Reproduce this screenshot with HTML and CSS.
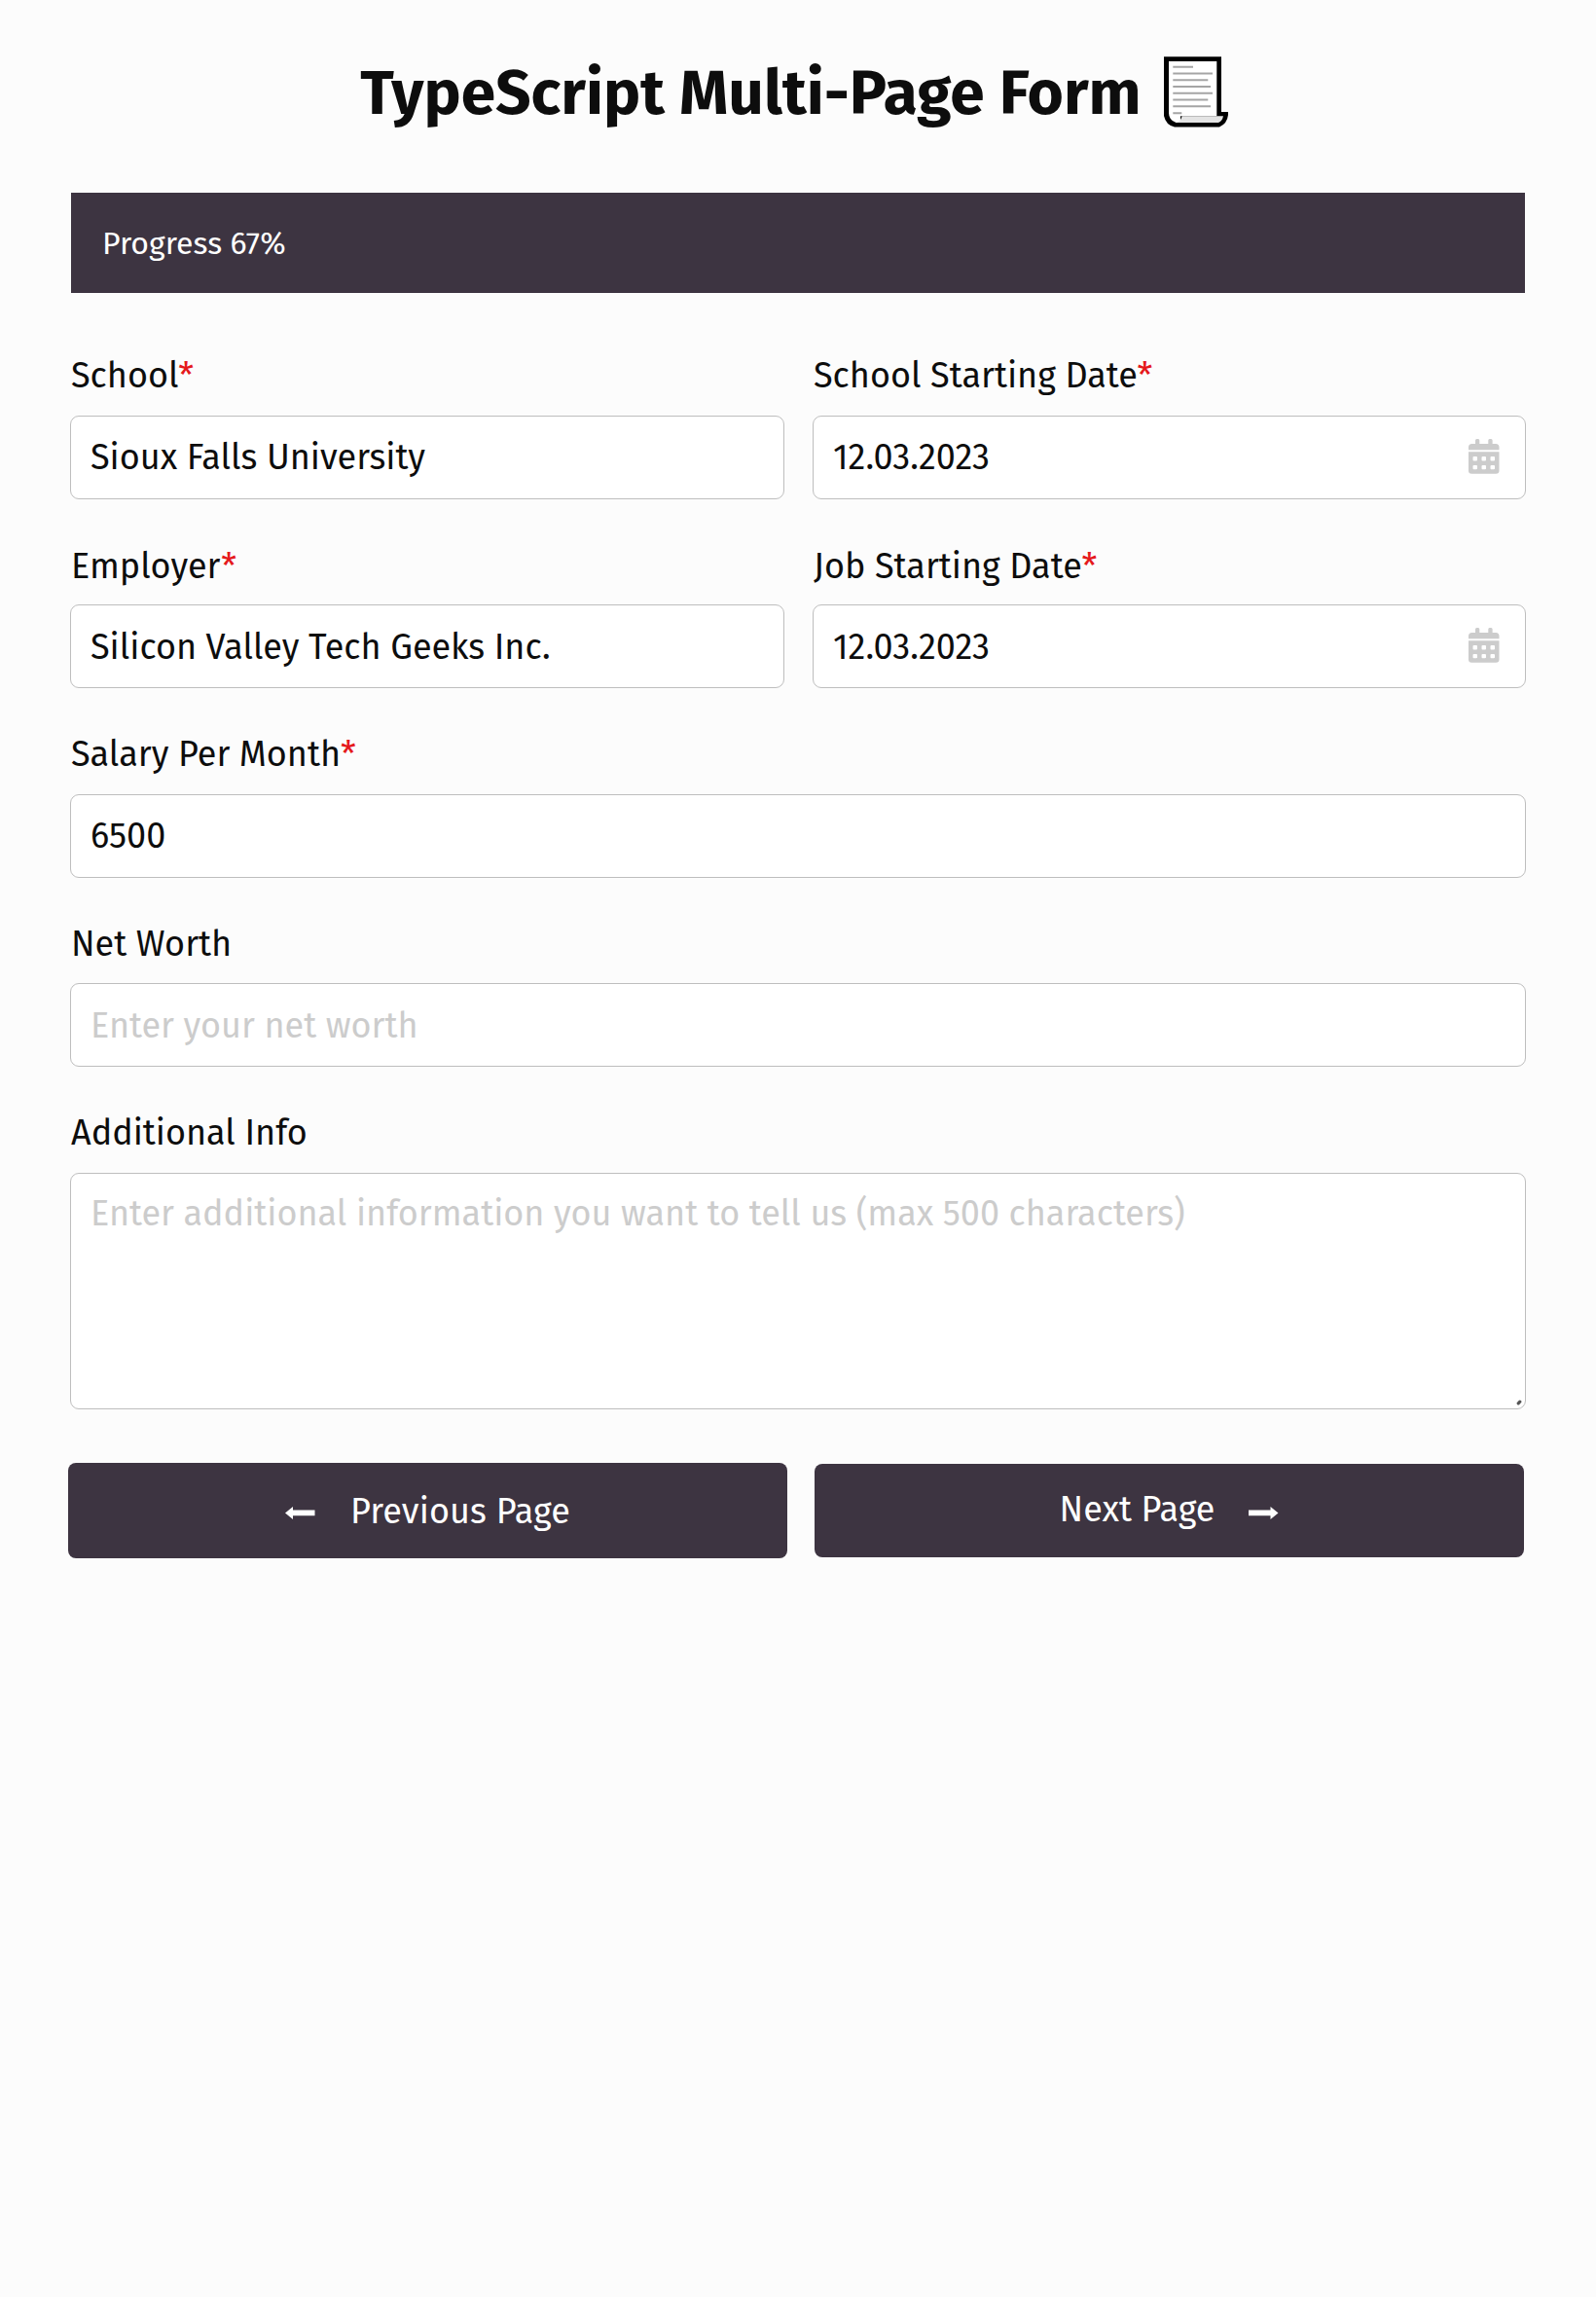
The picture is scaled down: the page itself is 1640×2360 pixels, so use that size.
FILE: index.html
```html
<!DOCTYPE html>
<html lang="en">
<head>
<meta charset="utf-8">
<title>TypeScript Multi-Page Form</title>
<link rel="stylesheet" href="styles.css">
</head>
<body>
<svg class="sprite" aria-hidden="true">
  <symbol id="calendar" viewBox="0 0 32 36">
    <path d="M7 5V1.5Q7 0 8.500 0H10Q11.300 0 11.300 1.500V5H20.300V1.500Q20.300 0 21.600 0H23.200Q24.600 0 24.600 1.500V5H28Q31.500 5 31.500 8.500V11.300H0V8.500Q0 5 3.500 5H7Z"/>
    <path fill-rule="evenodd" d="M0 13.300H31.500V32.500Q31.500 35.700 28.200 35.700H3.300Q0 35.700 0 32.500ZM5.500 18H8Q9 18 9 19V21.500Q9 22.500 8 22.500H5.500Q4.500 22.500 4.500 21.500V19Q4.500 18 5.500 18ZM14.500 18H17Q18 18 18 19V21.500Q18 22.500 17 22.500H14.500Q13.500 22.500 13.500 21.500V19Q13.500 18 14.500 18ZM23.500 18H26Q27 18 27 19V21.500Q27 22.500 26 22.500H23.500Q22.500 22.500 22.500 21.500V19Q22.500 18 23.500 18ZM5.500 27H8Q9 27 9 28V30.300Q9 31.300 8 31.300H5.500Q4.500 31.300 4.500 30.300V28Q4.500 27 5.500 27ZM14.500 27H17Q18 27 18 28V30.300Q18 31.300 17 31.300H14.500Q13.500 31.300 13.500 30.300V28Q13.500 27 14.500 27ZM23.500 27H26Q27 27 27 28V30.300Q27 31.300 26 31.300H23.500Q22.500 31.300 22.500 30.300V28Q22.500 27 23.500 27Z"/>
  </symbol>
</svg>
<main class="page">
  <h1 class="title">
    <span>TypeScript Multi-Page Form</span>
    <svg class="title-icon" viewBox="0 0 66 73" aria-hidden="true">
      <path d="M0 .3H59V57H66V60Q65 69 57 72.500H11Q2 70.500 0 61Z" fill="#000"/>
      <path d="M5 5H54.300V61.300H17V68H12.500Q5 65.500 5 58Z" fill="#fff"/>
      <path d="M18.500 61.300H61Q60 66.500 56 68H13Q18 66 18.500 61.300Z" fill="#e4e4e4"/>
      <path d="M9.300 10.700H30M9.300 17.500H50M9.300 24.300H45.300M9.300 31H48M9.300 37.800H50M9.300 44.500H45.300M9.300 51.300H48M9.300 58.200H18.300" fill="none" stroke="#a5a5a5" stroke-width="2"/>
    </svg>
  </h1>
  <div class="progress">Progress 67%</div>
  <form class="form">
    <div class="row two">
      <div class="field">
        <label class="label" for="school">School<span class="req">*</span></label>
        <input class="input" id="school" type="text" value="Sioux Falls University">
      </div>
      <div class="field">
        <label class="label" for="school-date">School Starting Date<span class="req">*</span></label>
        <div class="date">
          <input class="input" id="school-date" type="text" value="12.03.2023">
          <svg class="date-icon"><use href="#calendar"/></svg>
        </div>
      </div>
    </div>
    <div class="row two work">
      <div class="field">
        <label class="label" for="employer">Employer<span class="req">*</span></label>
        <input class="input" id="employer" type="text" value="Silicon Valley Tech Geeks Inc.">
      </div>
      <div class="field">
        <label class="label" for="job-date">Job Starting Date<span class="req">*</span></label>
        <div class="date">
          <input class="input" id="job-date" type="text" value="12.03.2023">
          <svg class="date-icon"><use href="#calendar"/></svg>
        </div>
      </div>
    </div>
    <div class="row">
      <div class="field">
        <label class="label" for="salary">Salary Per Month<span class="req">*</span></label>
        <input class="input" id="salary" type="text" value="6500">
      </div>
    </div>
    <div class="row worth">
      <div class="field">
        <label class="label" for="worth">Net Worth</label>
        <input class="input" id="worth" type="text" placeholder="Enter your net worth">
      </div>
    </div>
    <div class="row">
      <div class="field">
        <label class="label" for="info">Additional Info</label>
        <div class="area">
          <textarea class="input textarea" id="info" placeholder="Enter additional information you want to tell us (max 500 characters)"></textarea>
          <svg class="grip" viewBox="0 0 6 6"><path d="M2.200 3.800L3.800 2.200" stroke="#555" stroke-width="3.200" stroke-linecap="round"/></svg>
        </div>
      </div>
    </div>
    <div class="actions">
      <button class="btn prev" type="button">
        <svg class="arrow" viewBox="0 0 31 13"><path d="M0 6.500L8 0V3.500H30.500V9.200H8V13Z" fill="#fff"/></svg>
        <span>Previous Page</span>
      </button>
      <button class="btn next" type="button">
        <span>Next Page</span>
        <svg class="arrow" viewBox="0 0 31 13"><path d="M30.500 6.500L22.500 0V3.500H0V9.200H22.500V13Z" fill="#fff"/></svg>
      </button>
    </div>
  </form>
</main>
</body>
</html>
```
FILE: styles.css
```css
* { box-sizing: border-box; }

body {
  margin: 0;
  min-height: 2360px;
  background: #fcfcfc;
  color: #0d0d0d;
  font: 400 36px/44px "Fira Sans", "Noto Sans", sans-serif;
}

.sprite { position: absolute; width: 0; height: 0; }

.page { padding: 58px 72px 0; }

.title {
  display: flex;
  justify-content: center;
  gap: 23px;
  height: 140px;
  margin: 0;
  padding-right: 8px;
  font-size: 64px;
  font-weight: 700;
  line-height: 76px;
}

.title span { white-space: nowrap; }

.title-icon { width: 66px; height: 73px; }

.progress {
  height: 102.500px;
  margin: 0 1.500px 0 1px;
  padding: 30px 32px 0;
  background: #3d3441;
  color: #fff;
  font-size: 32px;
}

.form { padding-top: 63.500px; }

.row { margin-bottom: 45.400px; }

.two {
  display: grid;
  grid-template-columns: 734px 733px;
  gap: 29px;
}

.field { display: flex; flex-direction: column; }

.label { margin-bottom: 19px; padding-left: 1px; }

.work .label { padding-top: 2px; margin-bottom: 17px; }

.worth .label { padding-top: 1px; margin-bottom: 18px; }

.input {
  display: block;
  width: 100%;
  height: 86px;
  padding: 0 20px;
  border: 1.500px solid #bebebe;
  border-radius: 9px;
  outline: 0;
  background: #fff;
  color: #0d0d0d;
  font: inherit;
}

.work .input, .worth .input { padding-top: 2px; }

.input::placeholder { color: #ccc; opacity: 1; }

.req { color: #e5191c; }

.date, .area { position: relative; }

.date-icon {
  position: absolute;
  top: 24px;
  right: 27px;
  width: 32px;
  height: 36px;
  fill: #ccc;
}

.textarea {
  height: 243px;
  padding: 19px 20px;
  resize: none;
}

.grip {
  position: absolute;
  right: 4px;
  bottom: 4px;
  width: 6px;
  height: 6px;
}

.actions {
  display: flex;
  align-items: center;
  gap: 28px;
  margin: 55px 2px 0 -2px;
}

.btn {
  display: flex;
  align-items: center;
  justify-content: center;
  height: 96px;
  padding: 0;
  border: 0;
  border-radius: 8px;
  background: #3d3441;
  color: #fff;
  font: inherit;
}

.prev { width: 739px; height: 98px; gap: 36px; }

.prev span { padding-top: 2px; letter-spacing: 0.100px; }

.next { flex: 1; gap: 35px; }

.next span { padding-bottom: 1px; }

.arrow { width: 31px; height: 13px; margin-top: 5px; }
```
